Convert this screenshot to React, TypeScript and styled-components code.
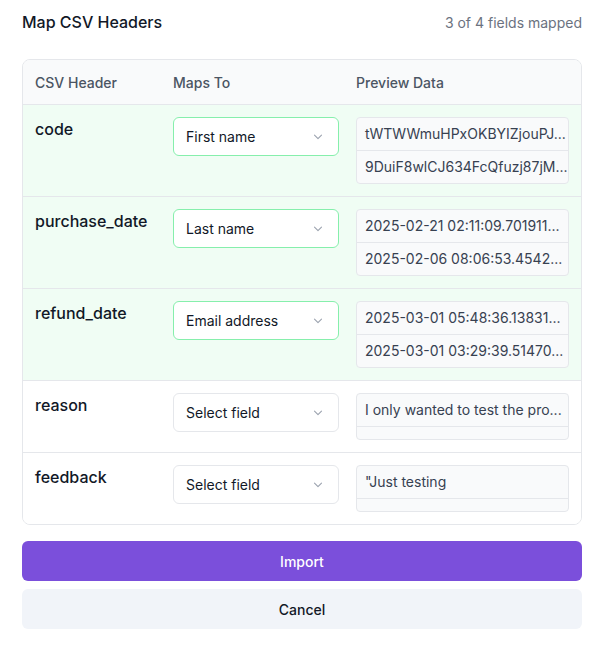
import React from "react";
import styled, { createGlobalStyle } from "styled-components";

type Row = {
  header: string;
  field: string;
  mapped: boolean;
  preview: string[];
};

const rows: Row[] = [
  {
    header: "code",
    field: "First name",
    mapped: true,
    preview: ["tWTWWmuHPxOKBYIZjouPJ...", "9DuiF8wlCJ634FcQfuzj87jM..."],
  },
  {
    header: "purchase_date",
    field: "Last name",
    mapped: true,
    preview: ["2025-02-21 02:11:09.701911...", "2025-02-06 08:06:53.4542..."],
  },
  {
    header: "refund_date",
    field: "Email address",
    mapped: true,
    preview: ["2025-03-01 05:48:36.13831...", "2025-03-01 03:29:39.51470..."],
  },
  {
    header: "reason",
    field: "Select field",
    mapped: false,
    preview: ["I only wanted to test the pro...", ""],
  },
  {
    header: "feedback",
    field: "Select field",
    mapped: false,
    preview: ["\"Just testing", ""],
  },
];

const GlobalStyle = createGlobalStyle`
  body {
    margin: 0;
    background: #ffffff;
    font-family: Inter, "Noto Sans", sans-serif;
    color: #111827;
  }
`;

const Chevron = () => (
  <svg width="10" height="6" viewBox="0 0 10 6" fill="none">
    <path d="M1.5 1.2l3.5 3.5 3.5-3.5" stroke="#9ca3af" strokeWidth="1.1" strokeLinecap="round" strokeLinejoin="round" />
  </svg>
);

export default function App() {
  return (
    <>
      <GlobalStyle />
      <Modal>
        <TopBar>
          <Title>Map CSV Headers</Title>
          <Counter>3 of 4 fields mapped</Counter>
        </TopBar>
        <Card>
          <HeadRow>
            <HeadCell>CSV Header</HeadCell>
            <HeadCell>Maps To</HeadCell>
            <HeadCell>Preview Data</HeadCell>
          </HeadRow>
          {rows.map((r) => (
            <DataRow key={r.header} $mapped={r.mapped}>
              <HeaderName>{r.header}</HeaderName>
              <Select $mapped={r.mapped}>
                <span>{r.field}</span>
                <Chevron />
              </Select>
              <Preview>
                {r.preview.map((p, i) => (
                  <PreviewLine key={i}>{p}</PreviewLine>
                ))}
              </Preview>
            </DataRow>
          ))}
        </Card>
        <Actions>
          <Button $primary>Import</Button>
          <Button>Cancel</Button>
        </Actions>
      </Modal>
    </>
  );
}

const Modal = styled.div`
  width: 601px;
  padding: 10px 19px 0 22px;
  box-sizing: border-box;
`;

const TopBar = styled.div`
  display: flex;
  align-items: center;
  justify-content: space-between;
  height: 24px;
  margin-bottom: 25px;
`;

const Title = styled.h2`
  margin: 0;
  font-size: 16px;
  font-weight: 500;
  color: #111827;
`;

const Counter = styled.span`
  font-size: 14px;
  color: #6b7280;
`;

const Card = styled.div`
  border: 1px solid #e5e7eb;
  border-radius: 8px;
  overflow: hidden;
`;

const Grid = styled.div`
  display: grid;
  grid-template-columns: 138px 183px 213px;
  padding: 0 12px;
`;

const HeadRow = styled(Grid)`
  height: 44px;
  align-items: center;
  background: #f9fafb;
`;

const HeadCell = styled.div`
  font-size: 14px;
  font-weight: 500;
  color: #4b5563;
`;

const DataRow = styled(Grid)<{ $mapped: boolean }>`
  padding-top: 12px;
  padding-bottom: 12px;
  align-items: start;
  background: ${({ $mapped }) => ($mapped ? "#f0fdf4" : "#ffffff")};
  border-top: 1px solid #e5e7eb;
`;

const HeaderName = styled.div`
  font-size: 16px;
  font-weight: 500;
  line-height: 24px;
  color: #111827;
`;

const Select = styled.div<{ $mapped: boolean }>`
  width: 166px;
  height: 39px;
  box-sizing: border-box;
  display: flex;
  align-items: center;
  justify-content: space-between;
  padding: 0 15px 0 12px;
  background: #ffffff;
  border: 1px solid ${({ $mapped }) => ($mapped ? "#86efac" : "#e5e7eb")};
  border-radius: 6px;
  font-size: 14px;
  color: #111827;
`;

const Preview = styled.div`
  border: 1px solid #e5e7eb;
  border-radius: 4px;
  background: #f9fafb;
  overflow: hidden;
`;

const PreviewLine = styled.div`
  padding: 6px 8px;
  font-size: 14px;
  line-height: 20px;
  color: #374151;
  white-space: nowrap;
  overflow: hidden;
  & + & {
    border-top: 1px solid #e5e7eb;
  }
  &:empty {
    height: 12px;
    padding: 0;
  }
`;

const Actions = styled.div`
  display: flex;
  flex-direction: column;
  gap: 8px;
  margin-top: 16px;
`;

const Button = styled.button<{ $primary?: boolean }>`
  height: 40px;
  border: none;
  border-radius: 6px;
  font-family: inherit;
  font-size: 14px;
  font-weight: 500;
  background: ${({ $primary }) => ($primary ? "#7b4fdb" : "#f1f4f9")};
  color: ${({ $primary }) => ($primary ? "#ffffff" : "#111827")};
  cursor: pointer;
`;
